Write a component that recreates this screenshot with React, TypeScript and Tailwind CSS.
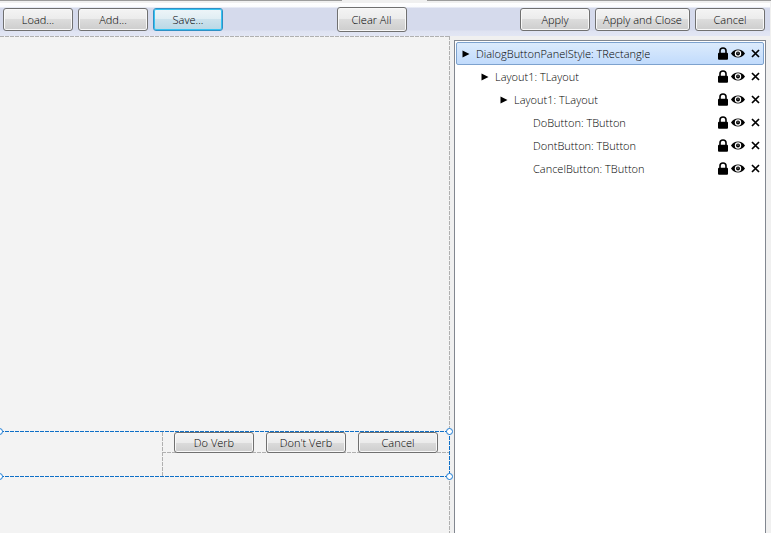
import { useState } from "react";
import type { ReactNode } from "react";
import clsx from "clsx";

const BUTTON_FACE =
  "border-[#707070] bg-[linear-gradient(#f4f4f4,#ebebeb_50%,#dcdcdc_50%,#cdcdcd)] shadow-[inset_0_0_0_1px_#f8f8f8]";

const BUTTON_FOCUSED =
  "border-[#2f8fc4] bg-[linear-gradient(#eef5f8,#dfedf3_50%,#cde2ec_50%,#b9d8e6)] shadow-[inset_0_0_0_1px_#35c4f3]";

type TreeNode = {
  id: number;
  label: string;
  indent: string;
  parent: boolean;
};

const NODES: TreeNode[] = [
  { id: 1, label: "DialogButtonPanelStyle: TRectangle", indent: "pl-[3px]", parent: true },
  { id: 2, label: "Layout1: TLayout", indent: "pl-[22px]", parent: true },
  { id: 3, label: "Layout1: TLayout", indent: "pl-[41px]", parent: true },
  { id: 4, label: "DoButton: TButton", indent: "pl-[60px]", parent: false },
  { id: 5, label: "DontButton: TButton", indent: "pl-[60px]", parent: false },
  { id: 6, label: "CancelButton: TButton", indent: "pl-[60px]", parent: false },
];

function ToolButton({ children, className, focused }: { children: ReactNode; className: string; focused?: boolean }) {
  return (
    <button
      type="button"
      className={clsx(
        "shrink-0 rounded-[3px] border text-[11px] leading-4 text-black",
        focused ? BUTTON_FOCUSED : BUTTON_FACE,
        className,
      )}
    >
      {children}
    </button>
  );
}

function LockIcon() {
  return (
    <svg width="12" height="13" viewBox="0 0 12 13" aria-hidden="true">
      <path d="M3 6.500V3.800C3 2 4.200 1 6 1s3 1 3 2.800v2.700" fill="none" stroke="#000" strokeWidth="1.600" />
      <rect x="1" y="5.800" width="10" height="7" rx="1" />
    </svg>
  );
}

function EyeIcon() {
  return (
    <svg width="14" height="9" viewBox="0 0 14 9" aria-hidden="true">
      <path d="M0 4.500C1.700 1.800 4.100.5 7 .5s5.300 1.300 7 4C12.300 7.200 9.900 8.500 7 8.500S1.700 7.200 0 4.500z" />
      <circle cx="7" cy="4.500" r="3.200" fill="#fff" />
      <circle cx="7" cy="4.500" r="2" />
      <circle cx="7" cy="4" r=".6" fill="#fff" />
    </svg>
  );
}

function CrossIcon() {
  return (
    <svg width="9" height="9" viewBox="0 0 9 9" aria-hidden="true">
      <path d="M1 1l7 7M8 1L1 8" stroke="#000" strokeWidth="1.700" />
    </svg>
  );
}

function TreeRow({ node, selected, onSelect }: { node: TreeNode; selected: boolean; onSelect: () => void }) {
  return (
    <li
      className={clsx(
        "flex h-[23px] items-center rounded-[2px] border pr-[3px]",
        node.indent,
        selected
          ? "border-[#7da2ce] bg-linear-to-b from-[#dcebfc] to-[#c1dbfc]"
          : "border-transparent",
      )}
    >
      <button type="button" onClick={onSelect} className="flex min-w-0 flex-1 items-center text-left">
        <span className="flex w-4 shrink-0 pl-0.5">
          {node.parent && (
            <svg width="8" height="8" viewBox="0 0 8 8" aria-hidden="true">
              <path d="M0.500 0.500L7.500 4L0.500 7.500z" />
            </svg>
          )}
        </span>
        <span className="truncate text-[11px] leading-4">{node.label}</span>
      </button>
      <button type="button" aria-label="Lock" className="mr-0.5">
        <LockIcon />
      </button>
      <button type="button" aria-label="Toggle visibility" className="mr-[6px]">
        <EyeIcon />
      </button>
      <button type="button" aria-label="Delete">
        <CrossIcon />
      </button>
    </li>
  );
}

const GUIDE = {
  grayRow: "h-px bg-[repeating-linear-gradient(to_right,#b0b0b0_0_4px,transparent_4px_5px)]",
  grayColumn: "w-px bg-[repeating-linear-gradient(to_bottom,#b0b0b0_0_4px,transparent_4px_5px)]",
  blueRow: "h-px bg-[repeating-linear-gradient(to_right,#0e6fc7_0_4px,transparent_4px_5px)]",
  blueColumn: "w-px bg-[repeating-linear-gradient(to_bottom,#0e6fc7_0_4px,transparent_4px_5px)]",
};

function Guide({ kind, className }: { kind: keyof typeof GUIDE; className: string }) {
  return <span className={clsx("pointer-events-none absolute", GUIDE[kind], className)} />;
}

function Handle({ className }: { className: string }) {
  return <span className={clsx("absolute size-[7px] rounded-full border border-[#1c7cd5] bg-white", className)} />;
}

export default function App() {
  const [selectedId, setSelectedId] = useState(1);

  return (
    <div className="flex h-screen flex-col overflow-hidden bg-[#f0f0f0] font-['Open_Sans','Noto_Sans',sans-serif] font-[350] text-black">
      <div className="flex h-px shrink-0 justify-between">
        <span className="w-[342px] bg-[#9c9c9c]" />
        <span className="w-[344px] bg-[#9c9c9c]" />
      </div>

      {/* Toolbar */}
      <header className="mt-0.5 mr-px flex h-[33px] shrink-0 items-center justify-between bg-[linear-gradient(#fff_0,#fafbfd_4px,#d5daec_5px,#d5daec_27px,#dfe3f2_28px,#e2e6f4)] pr-[5px] pl-[3px]">
        <div className="flex gap-[5px]">
          <ToolButton className="h-[23px] w-[70px]">Load...</ToolButton>
          <ToolButton className="h-[23px] w-[70px]">Add...</ToolButton>
          <ToolButton className="h-[23px] w-[70px]" focused>Save...</ToolButton>
        </div>
        <ToolButton className="h-[25px] w-[70px]">Clear All</ToolButton>
        <div className="flex gap-[5px]">
          <ToolButton className="h-[23px] w-[70px]">Apply</ToolButton>
          <ToolButton className="h-[23px] w-[95px]">Apply and Close</ToolButton>
          <ToolButton className="h-[23px] w-[70px]">Cancel</ToolButton>
        </div>
      </header>

      <div className="flex min-h-0 flex-1">
        {/* Design surface */}
        <main className="relative mr-1 flex min-w-0 flex-1 flex-col bg-[#f3f3f3]">
          <Guide kind="grayRow" className="inset-x-0 top-0" />
          <Guide kind="grayColumn" className="inset-y-0 right-0" />
          <div className="flex-1" />
          <section className="relative flex h-[46px] justify-end py-px">
            <div className="relative">
              <Guide kind="grayColumn" className="inset-y-0 left-0" />
              <div className="relative flex gap-3 px-3">
                <Guide kind="grayRow" className="inset-x-0 bottom-0" />
                <ToolButton className="relative h-[21px] w-20">Do Verb</ToolButton>
                <ToolButton className="relative h-[21px] w-20">Don't Verb</ToolButton>
                <ToolButton className="relative h-[21px] w-20">Cancel</ToolButton>
              </div>
            </div>
            <Guide kind="blueRow" className="inset-x-0 top-0" />
            <Guide kind="blueRow" className="inset-x-0 bottom-0" />
            <Guide kind="blueColumn" className="inset-y-0 right-0" />
            <Handle className="-top-[3px] -left-1" />
            <Handle className="-top-[3px] -right-[3px]" />
            <Handle className="-bottom-[3px] -left-1" />
            <Handle className="-right-[3px] -bottom-[3px]" />
          </section>
          <div className="h-14" />
        </main>

        {/* Structure tree */}
        <aside className="mt-1 mr-[5px] w-[312px] shrink-0 border border-b-0 border-[#828790] bg-white p-px">
          <ul>
            {NODES.map((node) => (
              <TreeRow
                key={node.id}
                node={node}
                selected={node.id === selectedId}
                onSelect={() => setSelectedId(node.id)}
              />
            ))}
          </ul>
        </aside>
      </div>
    </div>
  );
}
